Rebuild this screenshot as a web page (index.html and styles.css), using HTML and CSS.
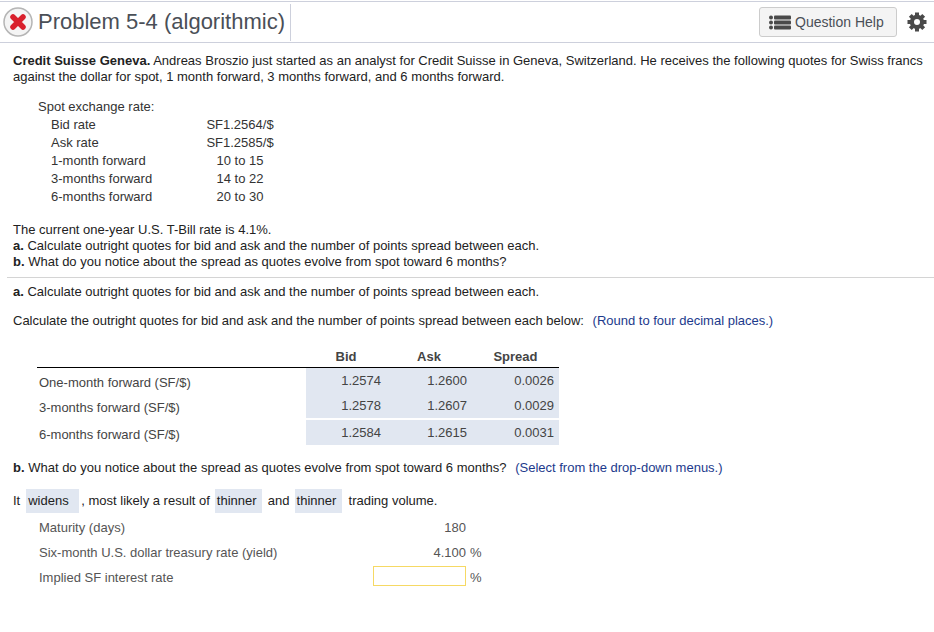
FILE: index.html
```html
<!DOCTYPE html>
<html lang="en">
<head>
    <meta charset="UTF-8">
    <meta name="viewport" content="width=device-width, initial-scale=1.0">
    <title>Problem 5-4 (algorithmic)</title>
    <link rel="stylesheet" href="styles.css">
</head>
<body>
    <div class="header">
        <div class="title-box">
            <svg class="status-icon" width="30" height="30" viewBox="0 0 30 30">
                <circle cx="15" cy="15" r="14" fill="#f4f4f4" stroke="#b5b5b5" stroke-width="1.5"/>
                <path d="M10 10 L20 20 M20 10 L10 20" stroke="#d9202c" stroke-width="5.5" stroke-linecap="round"/>
            </svg>
            <h1>Problem 5-4 (algorithmic)</h1>
        </div>
        <div class="header-tools">
            <button class="help-button">
                <svg width="22" height="15" viewBox="0 0 22 15">
                    <circle cx="2" cy="2.5" r="2" fill="#4a4a4a"/>
                    <circle cx="2" cy="7.5" r="2" fill="#4a4a4a"/>
                    <circle cx="2" cy="12.5" r="2" fill="#4a4a4a"/>
                    <rect x="5" y="0.5" width="17" height="4" rx="1" fill="#4a4a4a"/>
                    <rect x="5" y="5.5" width="17" height="4" rx="1" fill="#4a4a4a"/>
                    <rect x="5" y="10.5" width="17" height="4" rx="1" fill="#4a4a4a"/>
                </svg>
                Question Help
            </button>
            <svg class="gear" width="20" height="20" viewBox="0 0 20 20">
                <circle cx="10" cy="10" r="5.2" fill="none" stroke="#4a4a4a" stroke-width="4"/>
                <path d="M10 0.5 V19.5 M0.5 10 H19.5 M3.3 3.3 L16.7 16.7 M16.7 3.3 L3.3 16.7" stroke="#4a4a4a" stroke-width="4"/>
                <circle cx="10" cy="10" r="3" fill="#fff"/>
            </svg>
        </div>
    </div>

    <div class="question">
        <p class="intro"><b>Credit Suisse Geneva.</b> Andreas Broszio just started as an analyst for Credit Suisse in Geneva, Switzerland. He receives the following quotes for Swiss francs against the dollar for spot, 1 month forward, 3 months forward, and 6 months forward.</p>

        <div class="quotes">
            <div class="quotes-title">Spot exchange rate:</div>
            <div class="quote-row"><span>Bid rate</span><span class="left">SF1.2564/$</span></div>
            <div class="quote-row"><span>Ask rate</span><span class="left">SF1.2585/$</span></div>
            <div class="quote-row"><span>1-month forward</span><span>10 to 15</span></div>
            <div class="quote-row"><span>3-months forward</span><span>14 to 22</span></div>
            <div class="quote-row"><span>6-months forward</span><span>20 to 30</span></div>
        </div>

        <div class="summary">
            <div>The current one-year U.S. T-Bill rate is 4.1%.</div>
            <div><b>a.</b> Calculate outright quotes for bid and ask and the number of points spread between each.</div>
            <div><b>b.</b> What do you notice about the spread as quotes evolve from spot toward 6 months?</div>
        </div>
    </div>

    <div class="answer">
        <p class="part-a"><b>a.</b> Calculate outright quotes for bid and ask and the number of points spread between each.</p>
        <p class="part-note">Calculate the outright quotes for bid and ask and the number of points spread between each below: <span class="hint">(Round to four decimal places.)</span></p>

        <table class="outright">
            <thead>
                <tr><th class="name"></th><th>Bid</th><th>Ask</th><th>Spread</th></tr>
            </thead>
            <tbody>
                <tr><td class="name">One-month forward (SF/$)</td><td class="val">1.2574</td><td class="val">1.2600</td><td class="val">0.0026</td></tr>
                <tr><td class="name">3-months forward (SF/$)</td><td class="val">1.2578</td><td class="val">1.2607</td><td class="val">0.0029</td></tr>
                <tr class="row-last"><td class="name">6-months forward (SF/$)</td><td class="val">1.2584</td><td class="val">1.2615</td><td class="val">0.0031</td></tr>
            </tbody>
        </table>

        <p class="part-b"><b>b.</b> What do you notice about the spread as quotes evolve from spot toward 6 months? <span class="hint">(Select from the drop-down menus.)</span></p>

        <div class="sentence">
            It <span class="pick pick-wide">widens</span> , most likely a result of <span class="pick pick-first">thinner</span> and <span class="pick pick-second">thinner</span> trading volume.
        </div>

        <div class="rates">
            <div class="rate-row"><span class="rate-name">Maturity (days)</span><span class="rate-val">180</span><span class="rate-unit"></span></div>
            <div class="rate-row"><span class="rate-name">Six-month U.S. dollar treasury rate (yield)</span><span class="rate-val">4.100</span><span class="rate-unit">%</span></div>
            <div class="rate-row"><span class="rate-name">Implied SF interest rate</span><span class="rate-val"><input class="rate-input" type="text"></span><span class="rate-unit">%</span></div>
        </div>
    </div>
</body>
</html>
```

FILE: styles.css
```css
body {
    font-family: "Liberation Sans", Arial, sans-serif;
    font-size: 13px;
    color: #333;
    background-color: #fff;
    margin: 0;
    height: 632px;
    overflow: hidden;
}

p {
    margin: 0;
}

.header {
    display: flex;
    justify-content: space-between;
    align-items: center;
    height: 40px;
    margin-top: 1px;
    border-top: 1px solid #cdd0dc;
    border-bottom: 1px solid #cdd0dc;
}

.title-box {
    display: flex;
    align-items: center;
    gap: 5px;
    height: 37px;
    width: 291px;
    padding-left: 3px;
    box-sizing: border-box;
    border-right: 1px solid #cdd0dc;
}

h1 {
    margin: 0;
    font-size: 22px;
    font-weight: normal;
    color: #4a4f57;
}

.header-tools {
    display: flex;
    align-items: center;
    gap: 10px;
    padding-right: 7px;
}

.help-button {
    display: flex;
    align-items: center;
    gap: 4px;
    width: 138px;
    height: 30px;
    padding: 0 9px;
    font-family: inherit;
    font-size: 14px;
    color: #4a4f57;
    background-color: #f4f4f4;
    border: 1px solid #ccc;
    border-radius: 3px;
}

.question {
    padding: 10px 6px 7px 6px;
    border-bottom: 1px solid #d4d4d4;
    margin-left: 7px;
}

.intro {
    line-height: 16px;
    color: #222;
}

.quotes {
    margin: 13px 0 0 25px;
    line-height: 18px;
}

.quote-row {
    display: flex;
    padding-left: 13px;
}

.quote-row span:first-child {
    width: 155px;
}

.quote-row span:last-child {
    width: 68px;
    text-align: center;
}

.quote-row .left {
    text-align: left;
}

.summary {
    margin-top: 16px;
    line-height: 16px;
    color: #222;
}

.answer {
    padding: 6px 0 0 13px;
    color: #222;
}

.part-a {
    line-height: 16px;
}

.part-note {
    margin-top: 13px;
    line-height: 16px;
}

.hint {
    color: #1c3a8c;
    margin-left: 5px;
}

.outright {
    border-collapse: separate;
    border-spacing: 0;
    margin: 17px 0 0 24px;
    color: #444;
}

.outright th {
    box-sizing: border-box;
    height: 22px;
    padding: 0;
    font-weight: bold;
    text-align: center;
    border-bottom: 1px solid #000;
}

.outright .name {
    box-sizing: border-box;
    width: 269px;
    padding-left: 2px;
    text-align: left;
}

.outright td {
    box-sizing: border-box;
    height: 25px;
    line-height: 15px;
    vertical-align: top;
}

.outright td.name {
    padding-top: 7px;
}

.outright td.val {
    text-align: right;
    background-color: #e1e7f1;
    padding: 5px 5px 0 0;
}

.outright th:nth-child(2),
.outright .val:nth-child(2) {
    width: 80px;
}

.outright th:nth-child(3),
.outright .val:nth-child(3) {
    width: 86px;
}

.outright th:nth-child(4),
.outright .val:nth-child(4) {
    width: 87px;
}

.outright .row-last td {
    height: 27px;
    border-top: 2px solid #fff;
}

.part-b {
    margin-top: 15px;
    line-height: 16px;
}

.sentence {
    display: flex;
    margin-top: 13px;
    line-height: 24px;
}

.pick {
    padding: 0 2px;
    background-color: #e1e7f1;
    color: #222;
}

.pick-wide {
    box-sizing: border-box;
    width: 53px;
    margin: 0 2px 0 6px;
}

.pick-first {
    width: 43px;
    margin: 0 6px 0 5px;
}

.pick-second {
    width: 43px;
    margin: 0 7px 0 5px;
}

.rates {
    margin: 2px 0 0 26px;
    color: #555;
}

.rate-row {
    display: flex;
    align-items: center;
    height: 25px;
}

.rate-name {
    width: 334px;
}

.rate-val {
    width: 93px;
    text-align: right;
}

.rate-unit {
    margin-left: 4px;
}

.rate-input {
    display: block;
    box-sizing: border-box;
    width: 93px;
    height: 20px;
    margin-bottom: 4px;
    border: 1px solid #f6d964;
    background-color: #fff;
}
```
